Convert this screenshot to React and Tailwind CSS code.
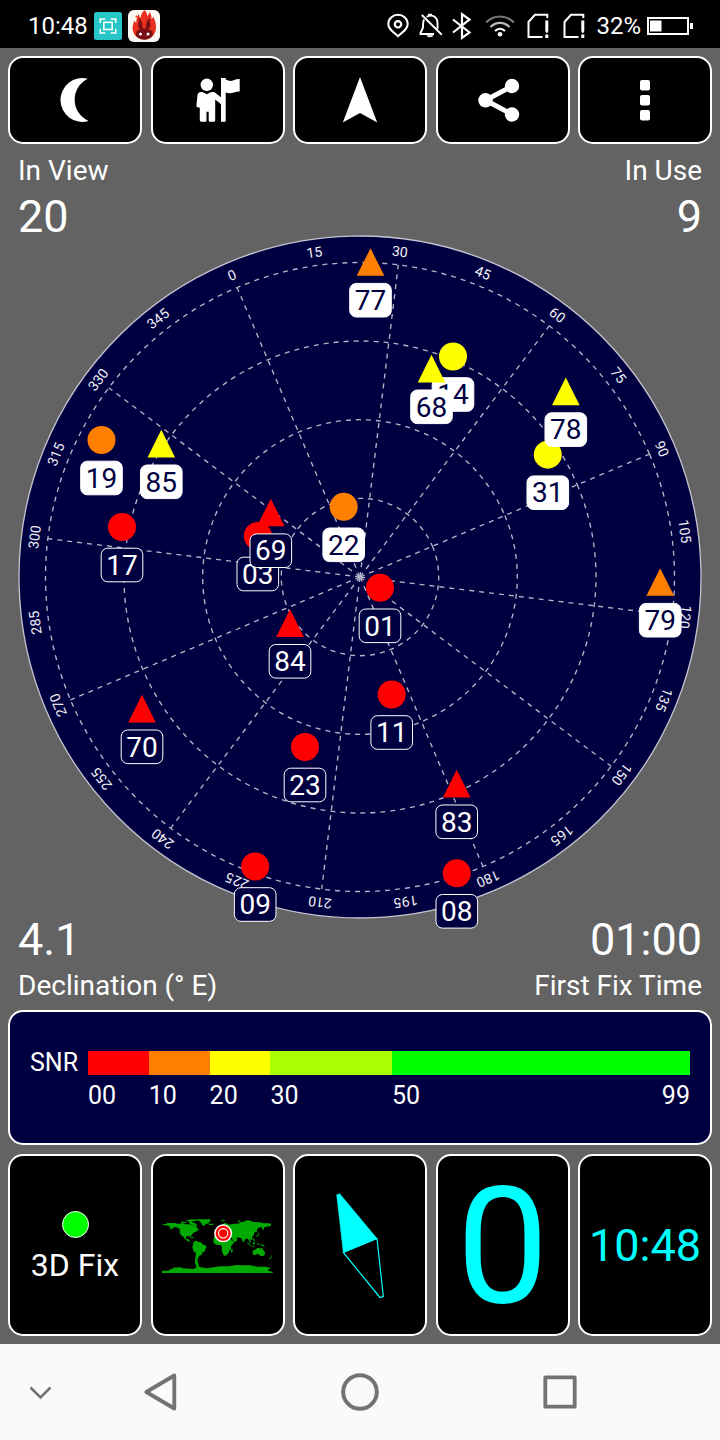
const RED = "#ff0000";
const ORANGE = "#ff8000";
const YELLOW = "#ffff00";

const CENTER = { x: 360, y: 577 };
const HEADING = -23;

const satellites = [
  { id: "14", shape: "circle", x: 453, y: 356.5, color: YELLOW, used: true },
  { id: "31", shape: "circle", x: 547.8, y: 454.7, color: YELLOW, used: true },
  { id: "19", shape: "circle", x: 101.5, y: 440, color: ORANGE, used: true },
  { id: "17", shape: "circle", x: 122, y: 527, color: RED, used: false },
  { id: "03", shape: "circle", x: 257.8, y: 536, color: RED, used: false },
  { id: "22", shape: "circle", x: 343.7, y: 506.8, color: ORANGE, used: true },
  { id: "01", shape: "circle", x: 380, y: 587.8, color: RED, used: false },
  { id: "11", shape: "circle", x: 391.7, y: 694.5, color: RED, used: false },
  { id: "23", shape: "circle", x: 305, y: 747, color: RED, used: false },
  { id: "09", shape: "circle", x: 255.2, y: 866.5, color: RED, used: false },
  { id: "08", shape: "circle", x: 456.8, y: 873.3, color: RED, used: false },
  { id: "77", shape: "triangle", x: 370.5, y: 262.2, color: ORANGE, used: true },
  { id: "68", shape: "triangle", x: 431.5, y: 368.8, color: YELLOW, used: true },
  { id: "78", shape: "triangle", x: 565.8, y: 391.6, color: YELLOW, used: true },
  { id: "85", shape: "triangle", x: 161.3, y: 443.8, color: YELLOW, used: true },
  { id: "69", shape: "triangle", x: 270.8, y: 512.7, color: RED, used: false },
  { id: "79", shape: "triangle", x: 660.2, y: 582.2, color: ORANGE, used: true },
  { id: "84", shape: "triangle", x: 290, y: 623.3, color: RED, used: false },
  { id: "70", shape: "triangle", x: 142, y: 708.8, color: RED, used: false },
  { id: "83", shape: "triangle", x: 456.7, y: 783.8, color: RED, used: false },
];

const snrLevels = [
  { from: 0, to: 10, label: "00", bg: "bg-[#ff0000]" },
  { from: 10, to: 20, label: "10", bg: "bg-[#ff8000]" },
  { from: 20, to: 30, label: "20", bg: "bg-[#ffff00]" },
  { from: 30, to: 50, label: "30", bg: "bg-[#aaff00]" },
  { from: 50, to: 99, label: "50", bg: "bg-[#00ff00]" },
];

const StatusBar = () => (
  <div className="h-12 bg-black flex items-center justify-between pl-7 pr-[26px] text-2xl leading-[46px] pt-[3px]">
    <div className="flex items-center">
      <span className="w-[66px]">10:48</span>
      {/* screenshot app */}
      <svg width="28" height="28" viewBox="94 11 28 28">
        <rect x="94" y="11" width="28" height="28" rx="2.5" fill="#26c6c6" />
        <g fill="none" stroke="#fff" strokeWidth="1.6">
          <rect x="103.8" y="21.3" width="8.4" height="7.2" />
          <path d="M100.3 22v-4h5M110.7 18h5v4M115.7 28v4h-5M105.3 32h-5v-4" />
        </g>
      </svg>
      {/* benchmark app */}
      <svg width="32" height="32" viewBox="128 9 32 32" className="ml-1.5">
        <rect x="128" y="9" width="32" height="32" rx="6" fill="#fbf7f2" />
        <path
          d="M144.500 9c2 2 2.700 4 2.700 6 1.200-.8 2-2.500 2.200-4 2 2 2.300 5 2 7 1-.5 1.600-1.500 1.800-2.500 2 4 2.800 7 2.800 11 0 7-5 12-11.700 12s-11.700-5-11.700-11.500c0-3 1-5.500 2-7.500.3 1 1 2 1.800 2.500-.4-3 .6-6 2.400-9 .2 1.500.8 3 1.800 4 .3-3 1.500-6 3.900-8z"
          fill="#e8301f"
        />
        <circle cx="136.500" cy="15.500" r="1" fill="#e8301f" />
        <path
          d="M138.500 17c3.500 2 4 6 4 11h-2c-1.500 0-2.500-3-2.500-5 .8-1.500 1-3 .5-6zM150 17c-3.500 2-4 6-4 11h2c1.500 0 2.500-3 2.500-5-.8-1.500-1-3-.5-6z"
          fill="#7a1013"
        />
        <ellipse cx="144.300" cy="33" rx="8.600" ry="5.700" fill="#7a1013" />
        <circle cx="140.500" cy="33" r="1.500" fill="#fff" />
        <circle cx="148" cy="33" r="1.500" fill="#fff" />
      </svg>
    </div>

    <div className="flex items-center">
      <svg width="170" height="30" viewBox="384 10 170 30">
        {/* location */}
        <g fill="none" stroke="#fff" strokeWidth="2">
          <path d="M398 35.300c-5-4.600-9.700-7.200-9.700-12.300a9.700 9.300 0 0 1 19.400 0c0 5.100-4.700 7.700-9.700 12.300z" />
          <circle cx="398" cy="23.300" r="3.200" strokeWidth="2.200" />
        </g>
        {/* muted bell */}
        <g fill="none" stroke="#fff" strokeWidth="1.900">
          <path d="M424 18.500c-1 2-1 4-1 8l-2.500 5.500v1h13.500M426.500 15.800c7-3.300 11 1.200 11 6.200v6" />
          <path d="M421.800 14l20 19.800" />
        </g>
        <path d="M428 12.800h4v2h-4zM426.500 34.300h7c-.6 2.600-6.400 2.600-7 0z" fill="#fff" />
        {/* bluetooth */}
        <path
          d="M453 18.500l16.500 13-7.500 5.300V13.200l7.500 5.300-16.500 13"
          fill="none"
          stroke="#fff"
          strokeWidth="2.200"
        />
        {/* wifi */}
        <g fill="none" stroke="#fff" strokeWidth="2.200">
          <path d="M486 21.500c8-8 20-8 28 0" stroke="#777" />
          <path d="M490.500 26c5.500-5.500 13.500-5.500 19 0" stroke="#bbb" />
          <path d="M495 30c3-3 7-3 10 0" />
        </g>
        <circle cx="500" cy="33.300" r="2.300" fill="#fff" />
        <SimIcon x={0} />
      </svg>
      <svg width="24" height="30" viewBox="562 10 24 30" className="ml-2">
        <SimIcon x={36} />
      </svg>
      <span className="ml-[10px]">32%</span>
      <svg width="47" height="18" viewBox="645 16 47 18" className="ml-[6px]">
        <rect x="646" y="17" width="40" height="16" fill="none" stroke="#fff" strokeWidth="2" />
        <rect x="648" y="19.500" width="11.500" height="11" fill="#fff" />
        <rect x="688" y="22" width="3" height="6" fill="#fff" />
      </svg>
    </div>
  </div>
);

const SimIcon = ({ x }) => (
  <g transform={`translate(${x} 0)`}>
    <path
      d="M542.500 36h-14V21l6.500-7.200h12.300v3.200"
      fill="none"
      stroke="#fff"
      strokeWidth="2"
    />
    <path d="M545.300 19.500h3V30l-1 2h-1l-1-2zM545.300 33.500h3v3.500h-3z" fill="#fff" />
  </g>
);

const toolbarIcons = [
  <path key="night" d="M87.700 78.800A21.800 21.900 0 1 0 88.500 121A23.300 23.300 0 0 1 87.700 78.800z" />,
  <g key="guide">
    <circle cx="206.800" cy="84.800" r="6.200" />
    <path d="M221 78h4.700v1.500c3 1.500 5 1.800 8 .8 2.500-1 4-1.200 6-1.200v12.300c-3 0-4.500.6-6.500 1.300-3 .8-5 .5-7.500-.2v29.200H221v-17.500l-5.800-4.700v20.500c0 1.200-.5 1.700-1.500 1.700h-3.500c-1 0-1.500-.5-1.500-1.500v-8.500h-2.200v8.500c0 1-.5 1.500-1.500 1.500h-3.700c-1 0-1.500-.5-1.500-1.700v-12.500h-1.500c-1.300 0-2-.7-1.900-2l1.100-10.500c.3-2.500 2.300-3 5-3l4.300 2.300 4.500-2.300h2.800l6.900 5.300z" />
  </g>,
  <path key="nav" d="M360 77l17.200 45.500L360 113l-17.200 9.500z" />,
  <g key="share">
    <path d="M511.500 86.200L485 100.300l26.500 14" fill="none" stroke="#fff" strokeWidth="5" />
    <circle cx="485" cy="100.300" r="7.200" />
    <circle cx="511.500" cy="86" r="7.200" />
    <circle cx="511.500" cy="114.500" r="7.200" />
  </g>,
  <g key="more">
    <rect x="640" y="80" width="10" height="10.500" rx="2" />
    <rect x="640" y="95" width="10" height="10.500" rx="2" />
    <rect x="640" y="110" width="10" height="10.500" rx="2" />
  </g>,
];

const toolbarViews = [
  "45 70 60 60",
  "188 70 60 60",
  "330 70 60 60",
  "472.500 70 60 60",
  "615 70 60 60",
];

const Toolbar = () => (
  <div className="grid grid-cols-5 gap-x-[8.5px] px-2 pt-2">
    {toolbarIcons.map((icon, index) => (
      <button
        key={index}
        className="h-[88px] bg-black border-2 border-white rounded-[15px] flex items-center justify-center"
      >
        <svg width="60" height="60" viewBox={toolbarViews[index]} fill="#fff">
          {icon}
        </svg>
      </button>
    ))}
  </div>
);

const Satellite = ({ sat }) => (
  <g transform={`translate(${sat.x} ${sat.y})`}>
    {sat.shape === "circle" ? (
      <circle r="14" fill={sat.color} />
    ) : (
      <path d="M0-14L13.800 13.600H-13.800z" fill={sat.color} />
    )}
    <rect
      x="-20.800"
      y="21.200"
      width="41.600"
      height="33.600"
      rx="6.500"
      fill={sat.used ? "#fff" : "#000040"}
      stroke="#fff"
      strokeWidth="1"
    />
    <text
      y="47.800"
      textAnchor="middle"
      fontSize="28"
      fill={sat.used ? "#000040" : "#fff"}
    >
      {sat.id}
    </text>
  </g>
);

const SkyView = () => (
  <svg width="720" height="682" viewBox="0 236 720 682" className="block overflow-visible">
    <g transform={`translate(${CENTER.x} ${CENTER.y}) rotate(${HEADING})`}>
      <circle r="341" fill="#000040" stroke="#c4c4d0" strokeWidth="1.300" />
      <g fill="none" stroke="#b4b4c8" strokeWidth="1.350" strokeDasharray="5 5">
        {[78.700, 157.300, 236, 314.500].map((r) => (
          <circle key={r} r={r} />
        ))}
        {Array.from({ length: 12 }, (_, i) => (
          <path key={i} d="M0 0V-314.500" transform={`rotate(${i * 30})`} />
        ))}
      </g>
      {Array.from({ length: 24 }, (_, i) => (
        <text
          key={i}
          y="-323"
          textAnchor="middle"
          fontSize="14"
          fill="#f0f0f5"
          transform={`rotate(${i * 15})`}
        >
          {i * 15}
        </text>
      ))}
    </g>
    {satellites.map((sat) => (
      <Satellite key={sat.id} sat={sat} />
    ))}
  </svg>
);

const SnrPanel = () => (
  <div className="mx-2 h-[135px] bg-[#000040] border-2 border-white rounded-[15px] pl-5 pr-5 pt-[39px] text-[25px] leading-[24px]">
    <div className="flex">
      <span className="w-[58px]">SNR</span>
      <div className="flex-1">
        <div className="flex h-6">
          {snrLevels.map((level) => (
            <div
              key={level.label}
              className={level.bg}
              style={{ width: `${((level.to - level.from) / 99) * 100}%` }}
            />
          ))}
        </div>
        <div className="flex mt-[9px]">
          {snrLevels.map((level) => (
            <div
              key={level.label}
              className="flex justify-between"
              style={{ width: `${((level.to - level.from) / 99) * 100}%` }}
            >
              <span>{level.label}</span>
              {level.to === 99 && <span>99</span>}
            </div>
          ))}
        </div>
      </div>
    </div>
  </div>
);

const WorldMap = () => (
  <svg width="111" height="54" viewBox="36 56 333 162">
    <g fill="#00aa00">
      <path d="M36 71h14v-3h24l6 2h10l6-2 8 4h14l4 2 4-4 6 6 6 2 4 5 6 6-6 2-4 3-8 3-2 4-6 5v6l-4-4-8-1-2 6 2 4h5l3 2 1 5 6 3-6-1-6-4-8-5-6-9-5-2-4-7-1-13-6-4-10-2-6 5-10 3 6-5-6-2 2-5-16-1z" />
      <path d="M92 66l6-3 4 3 6-1 2 3-10 1zM106 60l10-1 8-2 22 1-8 4-10 1-6 3-8-3zM116 66l8-1 12 4 6 6-4 4-8-6-10-2zM142 57h38l3 4-5 3-2 5-10 3-4 5-6-3-2-6-6-6-10-2zM176 70h14v4h-12z" />
      <path d="M118 109l10 1 6 4-8-1zM131 124l6-3 8 3 8 2 3 5 10 4 4 5-4 6-1 6-8 5-2 6-7 3-4 8-2 7 2 8-4 2-5-5 1-13 2-14-6-5-5-12z" />
      <path d="M192 108l9-4 14-1 6 4 16 1 7 10 4 5h6l-5 8-6 7v9l-5 4-2 7-6 7-8 1-4-7-3-9 1-9-4-7-12-1-7-3-3-6zM242 148l6-2v8l-4 3z" />
      <path d="M194 101l1-8 8-2 4-6 6-10 10-7 10 2 4 3 16-3 12 0 6-4 10-2 12-4 10 2 8 3 20 1 10 3h16l6 1v6l-12 3-8 2-3 9-5-6 2-4-12 2-4 6-1 7-7 1-1 8-6 5 2 6-3 5-3-3-3 1 5 7-2 3-7-10-4-4-7 4-2 8-4-2-4-10-9-3-6 3 4 4-7 7-7-4-5-10-8-1-1-4-7-1-5 4-5-6-5 1-4 3-5 4z" />
      <path d="M198 88l5-6 2 6-3 5zM212 60l10-1 4 3-10 1zM262 65l6-5 4 2-6 4zM284 60l6 1-2 2zM318 106l6-3 2-7 2 1-2 8-6 4zM309 116l4-1 2 8-4-1zM290 125l5 2 8 9-4 0zM303 136l10 2v2l-9-1zM308 127l8-3-2 8-4 2zM322 127l6 3-5 5zM328 130l12 4 6 5-10-2z" />
      <path d="M308 151l9-4 6-4 6-1 3 4 4-5 3 7 6 7-1 8-5 5-8-2-5-4-6 0-9 2-3-2zM357 174l6-4 4-3-3 6-6 4zM364 165l3 1-1 3z" />
      <path d="M134 184l8 2 4 6-8 6zM36 211h22v-4l10-1v-4l24-1 8 3 30 2 8-4 2-6 8-4-2 4 4 4 20 4 24-4 16-2h26l24-4 12 1h30l20 4 26 0 14 4-4 4-4 1v3l14 3v6H36z" />
    </g>
    <circle cx="219.500" cy="99" r="27" fill="#fff" />
    <circle cx="219.500" cy="99" r="22.500" fill="#ff0000" />
    <circle cx="219.500" cy="99" r="14" fill="none" stroke="#fff" strokeWidth="3.500" />
  </svg>
);

const Tile = ({ children }) => (
  <div className="h-[182px] bg-black border-2 border-white rounded-[15px] flex flex-col items-center justify-center pt-px">
    {children}
  </div>
);

const Tiles = () => (
  <div className="grid grid-cols-5 gap-x-[8.5px] px-2 pt-[9px] text-[#00ffff]">
    <Tile>
      <div className="w-[27px] h-[27px] mt-[3px] rounded-full bg-[#00ff00] border border-white" />
      <span className="text-[32px] leading-[38px] mt-2 text-white">3D Fix</span>
    </Tile>
    <Tile>
      <WorldMap />
    </Tile>
    <Tile>
      <svg width="52" height="110" viewBox="334 1190 52 110" stroke="#00ffff">
        <path d="M336.700 1193.700l3-1 37.300 44.800-33.700 14z" fill="#00ffff" strokeWidth="0.500" />
        <path d="M377 1237.500l6.300 58-3.300 1-36.700-45z" fill="none" strokeWidth="1.200" />
      </svg>
    </Tile>
    <Tile>
      <span className="text-[164px] leading-[170px]">0</span>
    </Tile>
    <Tile>
      <span className="text-[45px] leading-[46px] mt-px">10:48</span>
    </Tile>
  </div>
);

const NavBar = () => (
  <div className="h-24 bg-[#fafafa] mt-2">
    <svg width="720" height="96" viewBox="0 1344 720 96" fill="none" stroke="#737373">
      <path d="M30.500 1387.500l10 10 10-10" strokeWidth="2.600" />
      <path d="M174.300 1375.500v33l-28-16.500z" strokeWidth="3.800" strokeLinejoin="round" />
      <circle cx="360" cy="1392" r="16.800" strokeWidth="4" />
      <rect x="545.300" y="1377.300" width="29.400" height="29.400" strokeWidth="3.800" strokeLinejoin="round" />
    </svg>
  </div>
);

export default function App() {
  return (
    <div className="w-[720px] h-[1440px] bg-[#636363] text-white font-[Roboto,sans-serif] overflow-hidden">
      <StatusBar />
      <Toolbar />

      <div className="flex justify-between px-[18px] pt-2.5 text-[28px] leading-[33px]">
        <div>
          <p>In View</p>
          <p className="mt-2.5 text-[45px] leading-[39px]">20</p>
        </div>
        <div className="text-right">
          <p>In Use</p>
          <p className="mt-2.5 text-[45px] leading-[39px]">9</p>
        </div>
      </div>

      <SkyView />

      <div className="flex justify-between px-[18px] text-[28px] leading-[49px]">
        <div>
          <p className="text-[45px] leading-[43px]">4.1</p>
          <p>Declination (° E)</p>
        </div>
        <div className="text-right">
          <p className="text-[45px] leading-[43px]">01:00</p>
          <p>First Fix Time</p>
        </div>
      </div>

      <SnrPanel />
      <Tiles />
      <NavBar />
    </div>
  );
}
